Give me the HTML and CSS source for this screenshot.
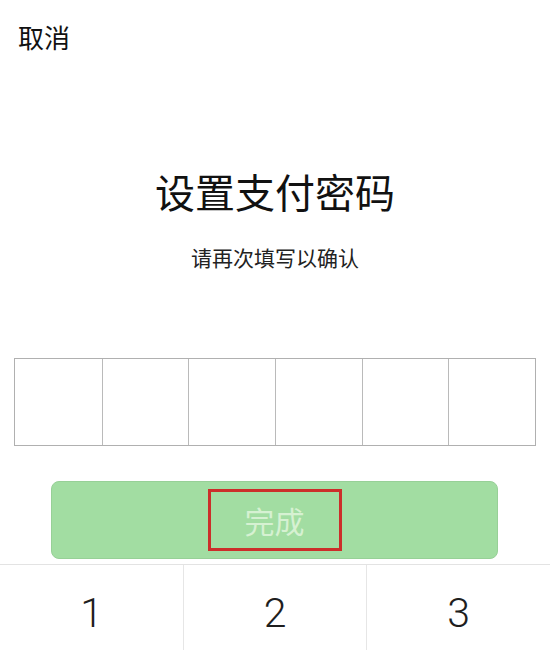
FILE: index.html
```html
<!DOCTYPE html>
<html lang="zh-CN">
<head>
<meta charset="utf-8">
<title>设置支付密码</title>
<link rel="stylesheet" href="styles.css">
</head>
<body>
<div class="page">
  <header class="topbar">
    <span class="cancel">取消</span>
  </header>
  <h1 class="title">设置支付密码</h1>
  <p class="subtitle">请再次填写以确认</p>
  <div class="pin">
    <div class="cell"></div>
    <div class="cell"></div>
    <div class="cell"></div>
    <div class="cell"></div>
    <div class="cell"></div>
    <div class="cell"></div>
  </div>
  <div class="btn-wrap">
    <div class="btn">
      <span class="btn-mark">完成</span>
    </div>
  </div>
  <div class="keypad">
    <div class="key">1</div>
    <div class="key">2</div>
    <div class="key">3</div>
  </div>
</div>
</body>
</html>
```

FILE: styles.css
```css
html, body {
  margin: 0;
  padding: 0;
  background: #ffffff;
}

.page {
  width: 550px;
  height: 650px;
  overflow: hidden;
  font-family: "Noto Sans CJK SC", "Noto Sans", sans-serif;
  color: #111111;
}

.topbar {
  padding: 22px 0 0 18px;
  height: 30px;
}

.cancel {
  font-size: 26px;
  line-height: 30px;
  color: #111111;
}

.title {
  margin: 115px 0 0 0;
  font-size: 40px;
  line-height: 48px;
  font-weight: 400;
  text-align: center;
  color: #111111;
}

.subtitle {
  margin: 28px 0 0 0;
  font-size: 21px;
  line-height: 28px;
  text-align: center;
  color: #222222;
}

.pin {
  margin: 87px 0 0 14px;
  width: 522px;
  height: 88px;
  display: grid;
  grid-template-columns: repeat(6, 1fr);
  box-sizing: border-box;
  border: 1.5px solid #b0b0b0;
}

.cell {
  border-left: 1.5px solid #bababa;
}

.cell:first-child {
  border-left: none;
}

.btn-wrap {
  margin: 35px 0 0 51px;
  width: 447px;
}

.btn {
  height: 78px;
  box-sizing: border-box;
  background: #a2dda2;
  border: 1px solid #97d097;
  border-radius: 8px;
  display: flex;
  align-items: center;
  justify-content: center;
}

.btn-mark {
  width: 134px;
  height: 62px;
  box-sizing: border-box;
  border: 3px solid #cc2e2a;
  display: flex;
  align-items: center;
  justify-content: center;
  font-size: 30px;
  color: #d6f1d2;
}

.keypad {
  margin-top: 5px;
  border-top: 1px solid #e3e3e3;
  display: grid;
  grid-template-columns: 183px 183px 1fr;
  height: 100px;
}

.key {
  border-left: 1px solid #e6e6e6;
  display: flex;
  justify-content: center;
  padding-top: 24px;
  font-family: Roboto, "Liberation Sans", sans-serif;
  font-weight: 300;
  font-size: 41px;
  line-height: 48px;
  color: #1e1e1e;
}

.key:first-child {
  border-left: none;
}
```
